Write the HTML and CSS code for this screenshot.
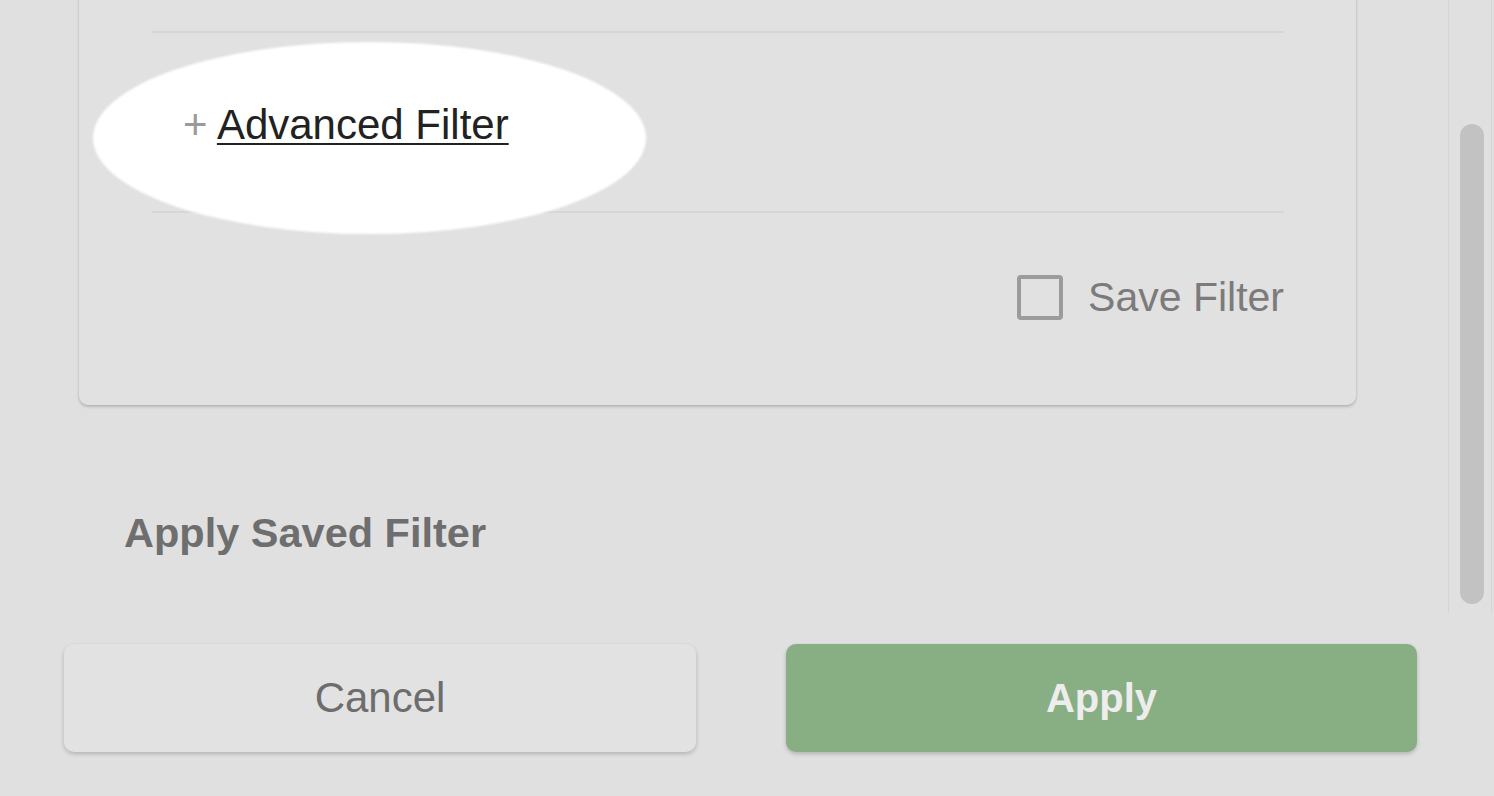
FILE: index.html
```html
<!DOCTYPE html>
<html lang="en">
<head>
<meta charset="utf-8">
<title>Filter</title>
<link rel="stylesheet" href="styles.css">
</head>
<body>
<div class="panel">
  <div class="scroller">
    <div class="content">
      <div class="card">
        <div class="divider"></div>
        <div class="adv-row">
          <div class="spotlight"></div>
          <a class="adv-link" href="#"><span class="plus">+</span> <span class="adv-text">Advanced Filter</span></a>
        </div>
        <div class="divider"></div>
        <div class="save-row">
          <span class="checkbox"></span>
          <span class="save-label">Save Filter</span>
        </div>
      </div>
      <h2 class="saved-title">Apply Saved Filter</h2>
    </div>
    <div class="scrollbar">
      <div class="thumb"></div>
    </div>
  </div>
  <div class="footer">
    <button class="btn btn-cancel">Cancel</button>
    <button class="btn btn-apply">Apply</button>
  </div>
</div>
</body>
</html>
```

FILE: styles.css
```css
html, body {
  margin: 0;
  padding: 0;
  background: #e0e0e0;
  font-family: "Liberation Sans", Arial, Helvetica, sans-serif;
  overflow: hidden;
}

.panel {
  width: 1494px;
  height: 796px;
  display: flex;
  flex-direction: column;
}

.scroller {
  height: 613px;
  display: flex;
  overflow: hidden;
}

.content {
  flex: 1;
  padding-left: 79px;
}

.card {
  width: 1277px;
  box-sizing: border-box;
  margin-top: -40px;
  padding: 71px 72px 0 73px;
  background: #e1e1e1;
  border-radius: 0 0 9px 9px;
  box-shadow: 0 2px 3px rgba(0, 0, 0, 0.18), 0 0 2px rgba(0, 0, 0, 0.08);
}

.divider {
  height: 2px;
  background: #d6d6d6;
}

.adv-row {
  position: relative;
  height: 178px;
  display: flex;
  align-items: center;
  padding-left: 31px;
}

.spotlight {
  position: absolute;
  left: -59px;
  top: 9px;
  width: 553px;
  height: 192px;
  border-radius: 50%;
  background: #ffffff;
  filter: blur(1px);
}

.adv-link {
  position: relative;
  font-size: 42px;
  color: #222222;
  text-decoration: none;
  margin-top: 5px;
}

.plus {
  color: #9a9a9a;
}

.adv-text {
  text-decoration: underline;
  text-decoration-thickness: 2px;
  text-underline-offset: 4px;
}

.save-row {
  display: flex;
  justify-content: flex-end;
  align-items: center;
  gap: 25px;
  padding: 61px 0 84px;
}

.checkbox {
  width: 38px;
  height: 37px;
  border: 4px solid #9b9b9b;
  border-radius: 4px;
}

.save-label {
  font-size: 41px;
  color: #7b7b7b;
}

.saved-title {
  margin: 104px 0 0 45px;
  font-size: 41.5px;
  font-weight: bold;
  color: #6e6e6e;
}

.scrollbar {
  width: 44px;
  margin-right: 2px;
  border-left: 1px solid #d5d5d5;
  border-right: 1px solid #d5d5d5;
  padding: 124px 0 0 11px;
  box-sizing: border-box;
}

.thumb {
  width: 24px;
  height: 480px;
  border-radius: 12px;
  background: #c2c2c2;
}

.footer {
  display: flex;
  gap: 90px;
  padding: 31px 0 0 64px;
}

.btn {
  height: 108px;
  border: none;
  border-radius: 10px;
  font-family: "Liberation Sans", Arial, Helvetica, sans-serif;
  box-shadow: 0 2px 4px rgba(0, 0, 0, 0.2);
  padding: 0;
}

.btn-cancel {
  width: 632px;
  background: #e2e2e2;
  color: #6d6d6d;
  font-size: 42px;
}

.btn-apply {
  width: 631px;
  background: #88ae84;
  color: #ededed;
  font-size: 40px;
  font-weight: bold;
}
```
